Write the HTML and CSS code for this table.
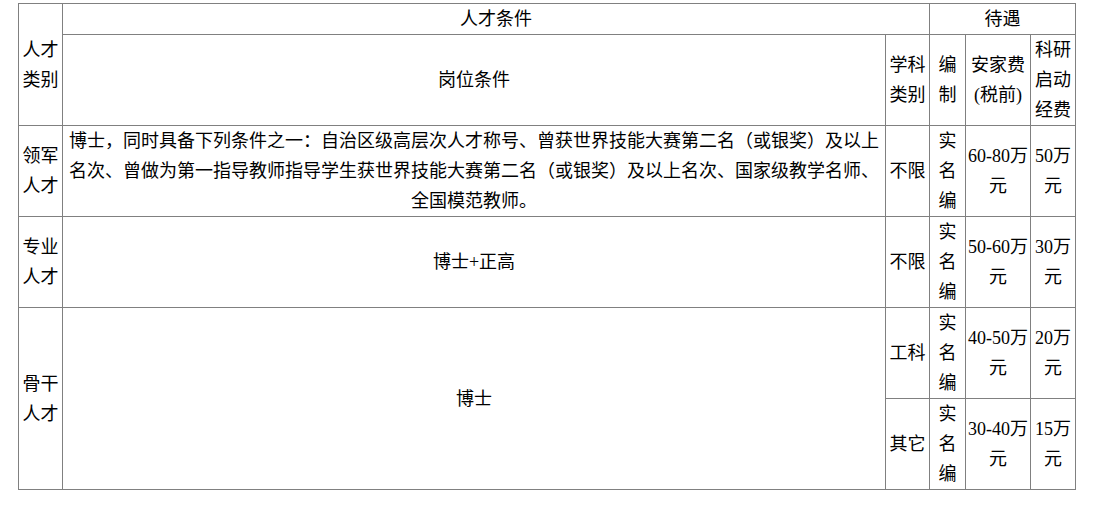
FILE: index.html
```html
<!DOCTYPE html>
<html lang="zh">
<head>
<meta charset="utf-8">
<link rel="stylesheet" href="styles.css">
</head>
<body>
<table class="grid">
  <colgroup>
    <col class="c-type">
    <col class="c-post">
    <col class="c-subj">
    <col class="c-est">
    <col class="c-home">
    <col class="c-fund">
  </colgroup>
  <tr class="r-head">
    <td rowspan="2">人才<br>类别</td>
    <td colspan="2">人才条件</td>
    <td colspan="3">待遇</td>
  </tr>
  <tr>
    <td>岗位条件</td>
    <td>学科<br>类别</td>
    <td>编<br>制</td>
    <td>安家费<br>(税前)</td>
    <td>科研<br>启动<br>经费</td>
  </tr>
  <tr>
    <td>领军<br>人才</td>
    <td class="long">博士，同时具备下列条件之一：自治区级高层次人才称号、曾获世界技能大赛第二名（或银奖）及以上名次、曾做为第一指导教师指导学生获世界技能大赛第二名（或银奖）及以上名次、国家级教学名师、全国模范教师。</td>
    <td>不限</td>
    <td>实<br>名<br>编</td>
    <td>60-80万<br>元</td>
    <td>50万<br>元</td>
  </tr>
  <tr>
    <td>专业<br>人才</td>
    <td>博士+正高</td>
    <td>不限</td>
    <td>实<br>名<br>编</td>
    <td>50-60万<br>元</td>
    <td>30万<br>元</td>
  </tr>
  <tr>
    <td rowspan="2">骨干<br>人才</td>
    <td rowspan="2">博士</td>
    <td>工科</td>
    <td>实<br>名<br>编</td>
    <td>40-50万<br>元</td>
    <td>20万<br>元</td>
  </tr>
  <tr>
    <td>其它</td>
    <td>实<br>名<br>编</td>
    <td>30-40万<br>元</td>
    <td>15万<br>元</td>
  </tr>
</table>
</body>
</html>
```

FILE: styles.css
```css
html, body {
  margin: 0;
  background: #ffffff;
}

body {
  padding: 3px 0 0 18px;
  font-family: "Liberation Serif", "Noto Sans CJK SC", serif;
  font-size: 18px;
  color: #000000;
}

.grid {
  border-collapse: collapse;
  table-layout: fixed;
  width: 1057px;
}

.c-type { width: 44px; }
.c-post { width: 823px; }
.c-subj { width: 44px; }
.c-est  { width: 36px; }
.c-home { width: 65px; }
.c-fund { width: 45px; }

.grid td {
  border: 1px solid #808080;
  padding: 0;
  line-height: 30px;
  height: 90px;
  text-align: center;
  vertical-align: middle;
  white-space: nowrap;
}

.grid .r-head td {
  height: 30px;
}

.grid td.long {
  white-space: normal;
  padding: 0 1px;
}
```
